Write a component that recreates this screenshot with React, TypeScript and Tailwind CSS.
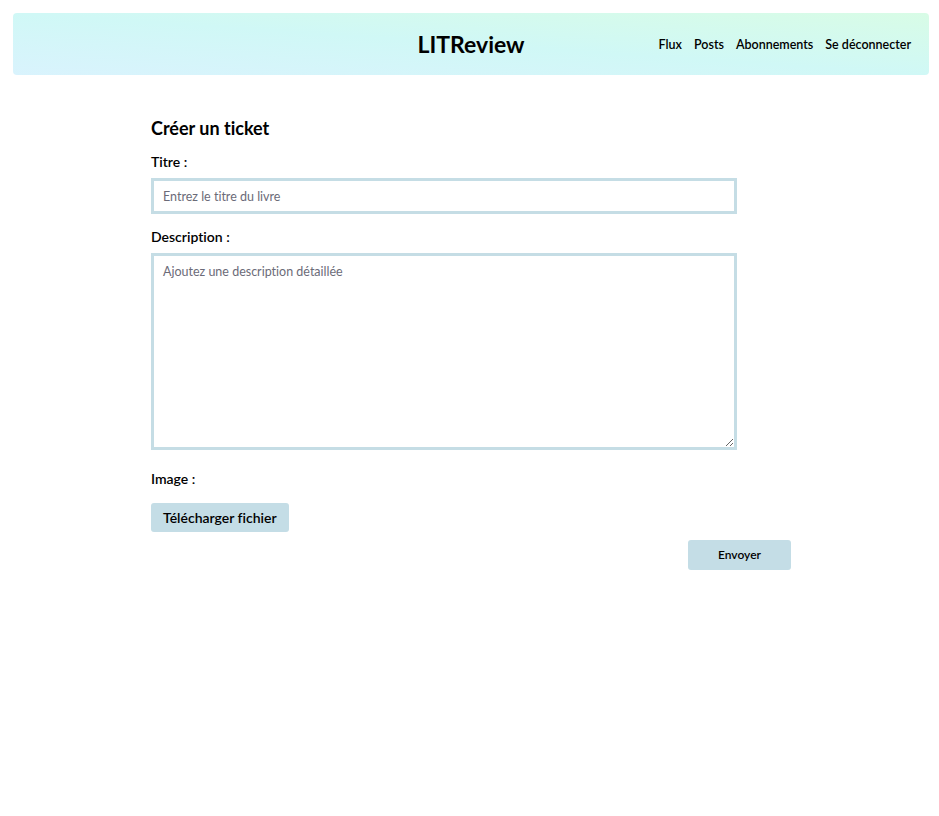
import React from 'react'

const font = { fontFamily: 'Lato, "Open Sans", sans-serif' }

export default function App() {
  return (
    <div className="min-h-[816px] bg-white text-black [font-variant-ligatures:none]" style={font}>
      <div className="pt-[13px] pb-[13px] pl-[13px] pr-[10px]">
        <header className="relative flex h-[62px] items-center rounded-[4px] bg-gradient-to-tr from-[#d9f3fd] via-[#d0f8f6] to-[#d8fce6] px-[18px]">
          <h1 className="absolute left-1/2 top-1/2 -translate-x-1/2 -translate-y-1/2 text-[23px] font-bold leading-none">LITReview</h1>
          <nav className="ml-auto mt-[2px] flex items-center gap-3 text-[12.5px] font-semibold">
            <a href="#">Flux</a>
            <a href="#">Posts</a>
            <a href="#">Abonnements</a>
            <a href="#">Se déconnecter</a>
          </nav>
        </header>
      </div>

      <main className="ml-[151px] w-[640px] pt-[28px]">
        <h2 className="text-[18px] font-bold leading-6">Créer un ticket</h2>

        <label className="mt-[12px] block text-[14px] font-semibold leading-5">Titre :</label>
        <input
          type="text"
          placeholder="Entrez le titre du livre"
          className="mt-[6px] block h-[36px] w-[586px] border-[3px] border-[#c5dde5] px-[9px] text-[12.5px] placeholder:text-[#6b6b78] outline-none"
        />

        <label className="mt-[13px] block text-[14px] font-semibold leading-5">Description :</label>
        <textarea
          placeholder="Ajoutez une description détaillée"
          className="mt-[6px] block h-[197px] w-[586px] border-[3px] border-[#c5dde5] px-[9px] py-[7px] text-[12.5px] placeholder:text-[#6b6b78] outline-none"
        />

        <label className="mt-[19px] block text-[14px] font-semibold leading-5">Image :</label>
        <button className="mt-[14px] block h-[29px] rounded-[3px] bg-[#c4dde6] px-3 text-[14px] font-semibold">
          Télécharger fichier
        </button>

        <div className="mt-[8px] flex justify-end">
          <button className="h-[30px] w-[103px] rounded-[3px] bg-[#c4dde6] text-[12px] font-semibold">Envoyer</button>
        </div>
      </main>
    </div>
  )
}
